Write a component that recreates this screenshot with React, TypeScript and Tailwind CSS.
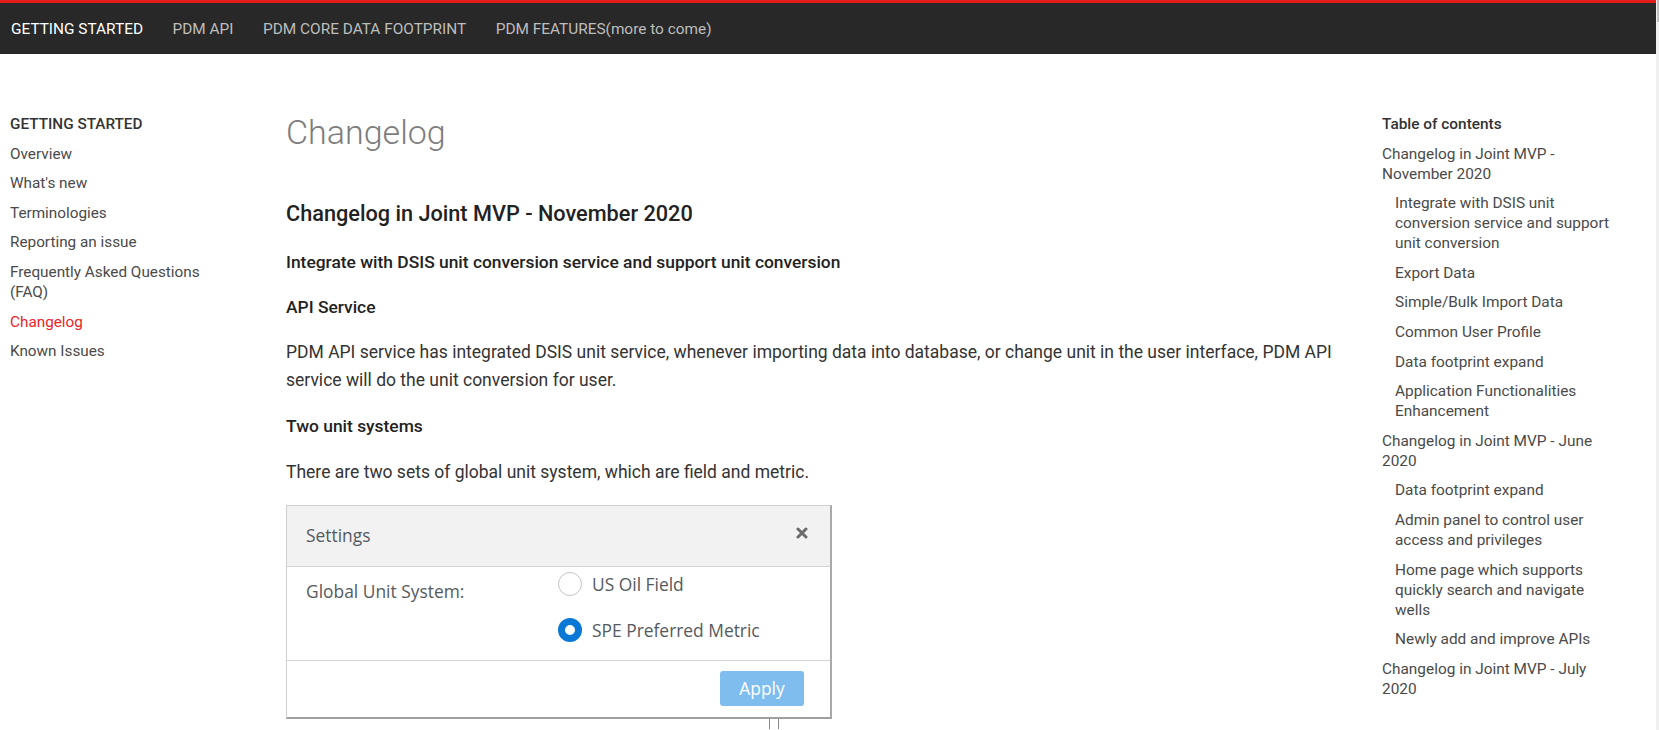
import React from 'react';

const topNav = ['GETTING STARTED', 'PDM API', 'PDM CORE DATA FOOTPRINT', 'PDM FEATURES(more to come)'];

const sideLinks = [
  'Overview',
  "What's new",
  'Terminologies',
  'Reporting an issue',
  'Frequently Asked Questions (FAQ)',
  'Changelog',
  'Known Issues',
];

interface TocItem {
  label: string;
  sub?: boolean;
}

const toc: TocItem[] = [
  { label: 'Changelog in Joint MVP - November 2020' },
  { label: 'Integrate with DSIS unit conversion service and support unit conversion', sub: true },
  { label: 'Export Data', sub: true },
  { label: 'Simple/Bulk Import Data', sub: true },
  { label: 'Common User Profile', sub: true },
  { label: 'Data footprint expand', sub: true },
  { label: 'Application Functionalities Enhancement', sub: true },
  { label: 'Changelog in Joint MVP - June 2020' },
  { label: 'Data footprint expand', sub: true },
  { label: 'Admin panel to control user access and privileges', sub: true },
  { label: 'Home page which supports quickly search and navigate wells', sub: true },
  { label: 'Newly add and improve APIs', sub: true },
  { label: 'Changelog in Joint MVP - July 2020' },
];

function SettingsShot() {
  return (
    <div className="relative w-[546px] border-t border-l border-[#cfcfcf] border-r-2 border-r-[#a9a9a9] border-b-2 border-b-[#9f9f9f] bg-white font-['Open_Sans',sans-serif] text-[17.4px] text-[#555a61]">
      {/* Header */}
      <div className="flex h-[61px] items-center justify-between border-b border-[#d4d4d4] bg-[#f2f2f2] pl-[19px] pr-[22px]">
        <span className="pb-[2px]">Settings</span>
        <svg width="12" height="12" viewBox="0 0 12 12" className="mb-[6px]">
          <path d="M2 2 L10 10 M10 2 L2 10" stroke="#6b6b6b" strokeWidth="3" strokeLinecap="round" />
        </svg>
      </div>

      {/* Body */}
      <div className="flex h-[94px] border-b border-[#d4d4d4] pl-[19px]">
        <div className="w-[252px] pt-[11px]">Global Unit System:</div>
        <div className="flex flex-col gap-[20px] pt-[4px]">
          <label className="flex items-center gap-[10px]">
            <span className="h-[24px] w-[24px] rounded-full border-[1.5px] border-[#c4c4c4] bg-white" />
            <span>US Oil Field</span>
          </label>
          <label className="flex items-center gap-[10px]">
            <span className="h-[24px] w-[24px] rounded-full border-[7px] border-[#0a78d4] bg-white" />
            <span>SPE Preferred Metric</span>
          </label>
        </div>
      </div>

      {/* Footer */}
      <div className="flex h-[56px] items-start justify-end pr-[26px] pt-[10px]">
        <button className="h-[35px] w-[84px] rounded-[3px] bg-[#80bdef] text-white">Apply</button>
      </div>

      <div className="absolute -bottom-[12px] left-[482px] h-[10px] w-px bg-[#8a8a8a]" />
      <div className="absolute -bottom-[12px] left-[491px] h-[10px] w-px bg-[#8a8a8a]" />
    </div>
  );
}

export default function App() {
  return (
    <div className="flex h-[730px] overflow-hidden bg-white font-['Roboto',sans-serif]">
      <div className="w-[1656px] shrink-0">
        {/* Top nav */}
        <div className="flex h-[54px] items-center gap-[29.5px] border-t-[3px] border-[#e41b1b] bg-[#282828] pl-[11px] pt-[2px] text-[15.4px]">
          {topNav.map((item, i) => (
            <span key={item} className={i === 0 ? 'text-white' : 'text-[#bdbdbd]'}>
              {item}
            </span>
          ))}
        </div>

        <div className="flex">
          {/* Left sidebar */}
          <div className="w-[286px] shrink-0 pl-[10px] pt-[60px] text-[15.3px] leading-[20px]">
            <div className="font-medium text-[#333]">GETTING STARTED</div>
            <div className="w-[205px]">
              {sideLinks.map((link) => (
                <div
                  key={link}
                  className={`mt-[9.6px] ${link === 'Changelog' ? 'text-[#e8262a]' : 'text-[#4a4a4a]'}`}
                >
                  {link}
                </div>
              ))}
            </div>
          </div>

          {/* Main */}
          <div className="w-[1070px] shrink-0 pt-[58px]">
            <h1 className="text-[34px] font-light leading-[40px] text-[#7d7d7d]">Changelog</h1>
            <h2 className="mt-[48px] text-[21.7px] font-medium leading-[28px] text-[#222]">
              Changelog in Joint MVP - November 2020
            </h2>
            <h3 className="mt-[22px] text-[17.4px] font-medium leading-[24px] text-[#222]">
              Integrate with DSIS unit conversion service and support unit conversion
            </h3>
            <h3 className="mt-[21px] text-[17.4px] font-medium leading-[24px] text-[#222]">API Service</h3>
            <p className="mt-[19px] text-[17.5px] leading-[28px] text-[#333]">
              PDM API service has integrated DSIS unit service, whenever importing data into database, or change unit in
              the user interface, PDM API service will do the unit conversion for user.
            </p>
            <h3 className="mt-[20px] text-[17.4px] font-medium leading-[24px] text-[#222]">Two unit systems</h3>
            <p className="mt-[20px] text-[17.5px] leading-[28px] text-[#333]">
              There are two sets of global unit system, which are field and metric.
            </p>
            <div className="mt-[19px]">
              <SettingsShot />
            </div>
          </div>

          {/* Table of contents */}
          <div className="ml-[26px] w-[235px] shrink-0 pt-[60px] text-[15.4px] leading-[20px]">
            <div className="font-medium text-[#333]">Table of contents</div>
            {toc.map((item, i) => (
              <div key={i} className={`mt-[9.6px] text-[#4a4a4a] ${item.sub ? 'pl-[13px]' : ''}`}>
                {item.label}
              </div>
            ))}
          </div>
        </div>
      </div>

      {/* scrollbar sliver */}
      <div className="w-[3px] shrink-0 bg-[#f0f0f0]">
        <div className="ml-[1px] h-[22px] w-[2px] bg-[#c1c1c1]" />
      </div>
    </div>
  );
}
